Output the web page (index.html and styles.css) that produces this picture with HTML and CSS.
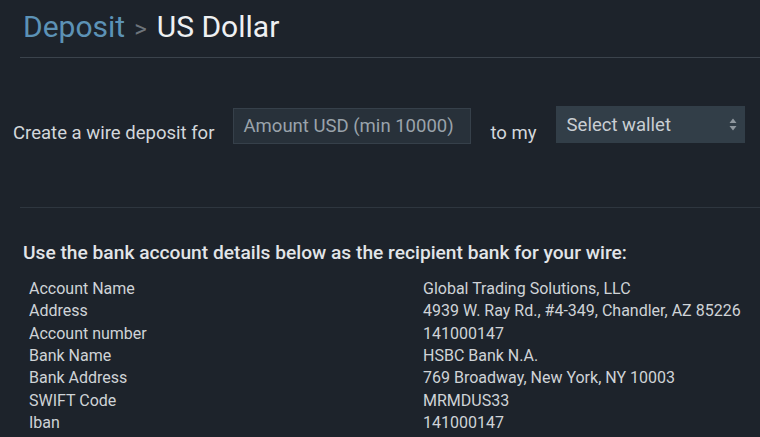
FILE: index.html
```html
<!DOCTYPE html>
<html>
<head>
<meta charset="utf-8">
<link rel="stylesheet" href="styles.css">
</head>
<body>
<div class="page">
  <header class="title-bar">
    <h1 class="title"><span class="crumb">Deposit</span><span class="sep">&gt;</span><span class="current">US Dollar</span></h1>
  </header>
  <section class="form-row">
    <span class="label">Create a wire deposit for</span>
    <div class="input">Amount USD (min 10000)</div>
    <span class="label to">to my</span>
    <div class="select">
      <span>Select wallet</span>
      <svg class="arrows" width="8" height="13" viewBox="0 0 8 13"><path d="M4 0.5 L7.5 5 L0.5 5 Z M4 12.5 L7.5 8 L0.5 8 Z" fill="#8f979e"/></svg>
    </div>
  </section>
  <hr class="divider">
  <section class="details">
    <h2 class="details-title">Use the bank account details below as the recipient bank for your wire:</h2>
    <div class="table">
      <div class="k">Account Name</div><div class="v">Global Trading Solutions, LLC</div>
      <div class="k">Address</div><div class="v">4939 W. Ray Rd., #4-349, Chandler, AZ 85226</div>
      <div class="k">Account number</div><div class="v">141000147</div>
      <div class="k">Bank Name</div><div class="v">HSBC Bank N.A.</div>
      <div class="k">Bank Address</div><div class="v">769 Broadway, New York, NY 10003</div>
      <div class="k">SWIFT Code</div><div class="v">MRMDUS33</div>
      <div class="k">Iban</div><div class="v">141000147</div>
    </div>
  </section>
</div>
</body>
</html>
```

FILE: styles.css
```css
html, body {
  margin: 0;
  padding: 0;
  background: #1d232b;
  overflow: hidden;
}
body {
  font-family: Roboto, "Liberation Sans", sans-serif;
  color: #d3d7db;
  width: 760px;
  height: 437px;
}
.page {
  padding-left: 20px;
}
.title-bar {
  border-bottom: 1px solid #3b434c;
  padding: 8px 0 9px 3px;
}
.title {
  margin: 0;
  font-weight: 400;
  font-size: 30px;
  line-height: 38px;
  display: flex;
  align-items: baseline;
}
.crumb { color: #5c92b6; }
.sep { color: #6d747b; font-size: 24px; margin: 0 10px 0 9px; }
.current { color: #eef0f2; }

.form-row {
  display: flex;
  align-items: flex-start;
  margin-left: -7px;
  padding: 48px 0 62px;
  font-size: 18.55px;
}
.label {
  color: #d3d7db;
  line-height: 24px;
  margin-top: 15px;
}
.input {
  margin: 2px 0 0 19px;
  width: 238px;
  height: 36px;
  box-sizing: border-box;
  background: #28313a;
  border: 1px solid #36404a;
  color: #9aa3ab;
  display: flex;
  align-items: center;
  padding-left: 9px;
}
.to { margin-left: 19px; }
.select {
  margin-left: 19px;
  width: 189px;
  height: 37px;
  box-sizing: border-box;
  background: #323e48;
  color: #c9ced3;
  display: flex;
  align-items: center;
  justify-content: space-between;
  padding: 0 8px 0 11px;
}
.divider {
  margin: 0;
  border: 0;
  border-top: 1px solid #2e363f;
}
.details {
  padding: 33px 0 0 3px;
}
.details-title {
  margin: 0 0 13px;
  font-size: 19.2px;
  font-weight: 500;
  color: #e2e5e8;
  line-height: 24px;
}
.table {
  display: grid;
  grid-template-columns: 394px 1fr;
  padding-left: 6px;
  font-size: 16px;
  line-height: 22.35px;
  color: #cfd3d7;
}
```
